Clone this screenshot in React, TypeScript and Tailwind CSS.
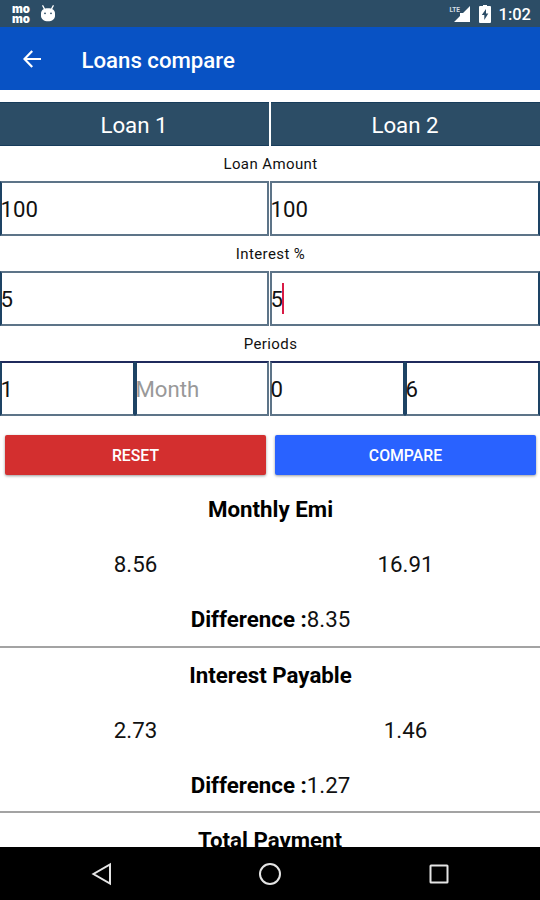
interface Field {
  value: string;
  placeholder?: string;
  focused?: boolean;
  border?: string;
}

interface Result {
  title: string;
  first: string;
  second: string;
  difference: string;
}

const results: Result[] = [
  { title: 'Monthly Emi', first: '8.56', second: '16.91', difference: '8.35' },
  { title: 'Interest Payable', first: '2.73', second: '1.46', difference: '1.27' },
];

function StatusBar() {
  return (
    <div className="flex h-[27px] shrink-0 items-center bg-[#2c4d66] pl-[12px] pr-[9px] text-white">
      <svg width="19" height="20" viewBox="0 0 19 20" overflow="visible" fill="#fff">
        <text x="0" y="9" fontFamily="Inter, sans-serif" fontSize="11.5" fontWeight="900" textLength="18" lengthAdjust="spacingAndGlyphs">mo</text>
        <text x="0" y="18.5" fontFamily="Inter, sans-serif" fontSize="11.5" fontWeight="900" textLength="18" lengthAdjust="spacingAndGlyphs">mo</text>
      </svg>
      <svg className="ml-[9px]" width="16" height="19" viewBox="0 0 16 19">
        <path d="M2.8 1.8 5 6M13.2 1.8 11 6" stroke="#fff" strokeWidth="1.4" strokeLinecap="round" />
        <path d="M1 9.5C1 6 4 4.2 8 4.2S15 6 15 9.5v2.2C15 15 12 17.3 8 17.3S1 15 1 11.7z" fill="#fff" />
        <circle cx="5" cy="9.3" r="0.9" fill="#2c4d66" />
        <circle cx="11" cy="9.3" r="0.9" fill="#2c4d66" />
      </svg>
      <div className="ml-auto flex items-center">
        <svg width="22" height="18" viewBox="0 0 22 18">
          <path d="M21 1v16H5l6-6V8h3z" fill="#fff" />
          <text x="0.5" y="7" fontFamily="Roboto, sans-serif" fontSize="7.5" fontWeight="700" fill="#d4dde4" textLength="10.5" lengthAdjust="spacingAndGlyphs">LTE</text>
        </svg>
        <svg className="ml-[8px]" width="12" height="18" viewBox="0 0 12 18">
          <path d="M1 1h3V0h4v1h3a1 1 0 0 1 1 1v15a1 1 0 0 1-1 1H1a1 1 0 0 1-1-1V2a1 1 0 0 1 1-1z" fill="#fff" />
          <path d="M7 4 2.8 10h2.5v5L9.3 8.5H7z" fill="#2c4d66" />
        </svg>
        <span className="ml-[8px] pt-[3px] text-[16.5px] font-medium leading-none">1:02</span>
      </div>
    </div>
  );
}

function AppBar() {
  return (
    <header className="flex h-[63px] shrink-0 items-center bg-[#0852c4] pl-[23px] text-white">
      <svg width="18" height="18" viewBox="0 0 18 18" fill="none" stroke="#fff" strokeWidth="2.2">
        <path d="M18 9H1.8M9.2 1 1.5 9l7.7 8" />
      </svg>
      <h1 className="ml-[40.5px] pt-[4px] text-[22.2px] font-medium leading-none">Loans compare</h1>
    </header>
  );
}

function FieldBox({ value, placeholder, focused, border = 'border-[#5d7488] border-l-[#1d4364]' }: Field) {
  return (
    <div className={`flex min-w-0 flex-1 items-center border-2 bg-white text-[22.2px] leading-none ${border}`}>
      {/* the text starts right on the border, as in an unpadded EditText */}
      <span className={value ? '-ml-[1.5px] pt-[2px] text-[#111]' : '-ml-px pt-[2px] text-[#999]'}>{value || placeholder}</span>
      {focused && <span className="-ml-px h-[31px] w-[2px] bg-[#d81b45]" />}
    </div>
  );
}

function FieldRow({ label, left, right }: { label: string; left: Field[]; right: Field[] }) {
  return (
    <section className="shrink-0">
      <div className="flex h-[35px] items-center justify-center pl-px pt-[2px] text-[15px] tracking-[0.4px] text-[#111]">{label}</div>
      <div className="flex h-[55px] gap-px">
        <div className="flex w-[269px]">
          {left.map((f, i) => <FieldBox key={i} {...f} />)}
        </div>
        <div className="flex w-[270px]">
          {right.map((f, i) => <FieldBox key={i} {...f} />)}
        </div>
      </div>
    </section>
  );
}

function ResultBlock({ title, first, second, difference }: Result) {
  return (
    <section className="flex h-[165.5px] shrink-0 flex-col border-b-2 border-[#a3a3a3] text-center text-[22.3px] text-[#111]">
      <h2 className="flex h-[54px] shrink-0 items-center justify-center pl-px pt-[2px] font-bold text-black">{title}</h2>
      <div className="flex h-[55px] shrink-0 items-center pt-[3px]">
        <span className="flex-1 pl-px">{first}</span>
        <span className="flex-1 pl-px">{second}</span>
      </div>
      <p className="flex h-[54px] shrink-0 items-center justify-center pl-px pt-[4px]">
        <b className="text-black">Difference :</b>{difference}
      </p>
    </section>
  );
}

function NavBar() {
  return (
    <nav className="flex h-[53px] shrink-0 items-center justify-between bg-black pl-[91px] pr-[91px]">
      <svg width="22" height="24" viewBox="0 0 22 24" fill="none" stroke="#e4e4e4" strokeWidth="2">
        <path d="M19 2.5v19L2.5 12z" />
      </svg>
      <svg className="-ml-[2px]" width="24" height="24" viewBox="0 0 24 24" fill="none" stroke="#e4e4e4" strokeWidth="2">
        <circle cx="12" cy="12" r="10" />
      </svg>
      <svg width="20" height="20" viewBox="0 0 20 20" fill="none" stroke="#e4e4e4" strokeWidth="2">
        <rect x="1.5" y="1.5" width="17" height="17" rx="0.5" />
      </svg>
    </nav>
  );
}

export default function App() {
  const second = 'border-[#5d7488] border-r-[#1d4364]';

  return (
    <div className="flex h-[900px] w-[540px] flex-col overflow-hidden bg-white font-['Roboto',sans-serif]">
      <StatusBar />
      <AppBar />
      <main className="flex min-h-0 flex-1 flex-col overflow-hidden pt-[12px]">
        <div className="flex h-[44px] shrink-0 gap-[2px] text-[22.3px] text-white">
          <div className="flex flex-1 items-center justify-center border-y border-[#173c5b] bg-[#2c4d66] pr-px pt-[3px]">Loan 1</div>
          <div className="flex flex-1 items-center justify-center border-y border-[#173c5b] bg-[#2c4d66] pr-px pt-[3px]">Loan 2</div>
        </div>
        <FieldRow label="Loan Amount" left={[{ value: '100' }]} right={[{ value: '100', border: second }]} />
        <FieldRow label="Interest %" left={[{ value: '5' }]} right={[{ value: '5', focused: true, border: second }]} />
        <FieldRow
          label="Periods"
          left={[
            { value: '1', border: 'border-[#1d4364] border-b-[#5d7488] border-t-[#1f2a5c]' },
            { value: '', placeholder: 'Month', border: 'border-[#5d7488] border-l-[#1d4364] border-t-[#1f2a5c]' },
          ]}
          right={[
            { value: '0', border: 'border-[#5d7488] border-r-[#1d4364] border-t-[#1f2a5c]' },
            { value: '6', border: 'border-[#1d4364] border-b-[#5d7488] border-t-[#1f2a5c]' },
          ]}
        />
        <div className="mt-[19px] flex h-[40px] shrink-0 gap-[9px] pl-[5px] pr-[4px] text-[15.8px] font-medium text-white">
          <button className="flex-1 rounded-[2px] bg-[#d32f2f] pt-px shadow-[0_1px_3px_rgba(0,0,0,0.4)]">RESET</button>
          <button className="flex-1 rounded-[2px] bg-[#2962ff] pt-px shadow-[0_1px_3px_rgba(0,0,0,0.4)]">COMPARE</button>
        </div>
        <div className="mt-[7px] flex flex-col">
          {results.map((r) => <ResultBlock key={r.title} {...r} />)}
          <h2 className="flex h-[55px] shrink-0 items-center justify-center pt-px text-[22.3px] font-bold text-black">Total Payment</h2>
        </div>
      </main>
      <NavBar />
    </div>
  );
}
